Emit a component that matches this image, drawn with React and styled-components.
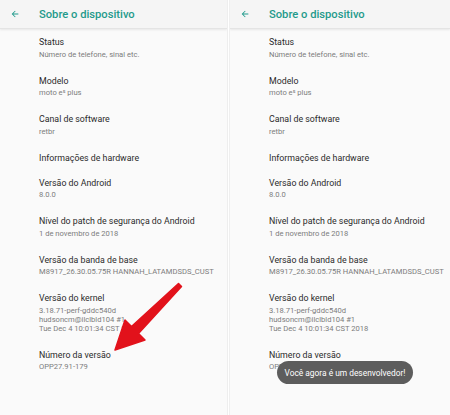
import React from "react";
import styled, { createGlobalStyle } from "styled-components";

const GlobalStyle = createGlobalStyle`
  html, body {
    margin: 0;
    padding: 0;
    background: #fafafa;
  }
  body {
    font-family: Roboto, "Noto Sans", sans-serif;
  }
`;

const Screen = styled.div`
  width: 450px;
  height: 415px;
  display: flex;
  overflow: hidden;
  position: relative;
`;

const Panel = styled.div`
  width: ${(p) => p.width}px;
  height: 100%;
  background: #fafafa;
  position: relative;
  overflow: hidden;
  flex-shrink: 0;
`;

const Divider = styled.div`
  width: 3px;
  background: #ffffff;
  border-left: 1px solid #eeeeee;
  border-right: 1px solid #efefef;
  box-sizing: border-box;
`;

const Header = styled.div`
  height: 29px;
  display: flex;
  align-items: center;
  background: #f5f5f5;
  border-bottom: 1px solid #e4e4e4;
  box-shadow: 0 1px 2px rgba(0, 0, 0, 0.08);
  box-sizing: border-box;
  position: relative;
  z-index: 1;
`;

const Back = styled.div`
  width: 39px;
  display: flex;
  justify-content: flex-start;
  padding-left: 10px;
  box-sizing: border-box;
  color: #1f9a8b;
`;

const Title = styled.div`
  font-size: 11.2px;
  font-weight: 500;
  color: #1f9a8b;
  white-space: nowrap;
`;

const List = styled.div`
  padding-left: 39px;
  display: flex;
  flex-direction: column;
`;

const Item = styled.div`
  padding: 7px 0 6px;
  white-space: nowrap;
`;

const ItemTitle = styled.div`
  font-size: 8.8px;
  line-height: 12px;
  color: #2a2a2a;
`;

const ItemSub = styled.div`
  font-size: 7.6px;
  line-height: 9px;
  margin-top: 1.5px;
  margin-bottom: 3px;
  color: #7c7c7c;
`;

const Toast = styled.div`
  position: absolute;
  left: 47px;
  top: 361px;
  width: 136px;
  height: 23px;
  border-radius: 12px;
  background: #5d5d5d;
  color: #ffffff;
  font-size: 8.4px;
  display: flex;
  align-items: center;
  justify-content: center;
  z-index: 2;
`;

const Pointer = styled.svg`
  position: absolute;
  left: 0;
  top: 0;
  z-index: 2;
`;

const items = [
  { title: "Status", lines: ["Número de telefone, sinal etc."] },
  { title: "Modelo", lines: ["moto e⁵ plus"] },
  { title: "Canal de software", lines: ["retbr"] },
  { title: "Informações de hardware", lines: [] },
  { title: "Versão do Android", lines: ["8.0.0"] },
  { title: "Nível do patch de segurança do Android", lines: ["1 de novembro de 2018"] },
  { title: "Versão da banda de base", lines: ["M8917_26.30.05.75R HANNAH_LATAMDSDS_CUST"] },
  {
    title: "Versão do kernel",
    lines: ["3.18.71-perf-gddc540d", "hudsoncm@ilclbld104 #1", "Tue Dec 4 10:01:34 CST 2018"],
  },
  { title: "Número da versão", lines: ["OPP27.91-179"] },
];

function BackArrow() {
  return (
    <svg width="10" height="10" viewBox="0 0 24 24">
      <path
        d="M20 11H7.83l5.59-5.59L12 4l-8 8 8 8 1.41-1.41L7.83 13H20v-2z"
        fill="currentColor"
      />
    </svg>
  );
}

function About({ width, children }) {
  return (
    <Panel width={width}>
      <Header>
        <Back>
          <BackArrow />
        </Back>
        <Title>Sobre o dispositivo</Title>
      </Header>
      <List>
        {items.map((it) => (
          <Item key={it.title}>
            <ItemTitle>{it.title}</ItemTitle>
            {it.lines.length > 0 && (
              <ItemSub>
                {it.lines.map((l) => (
                  <div key={l}>{l}</div>
                ))}
              </ItemSub>
            )}
          </Item>
        ))}
      </List>
      {children}
    </Panel>
  );
}

export default function App() {
  return (
    <>
      <GlobalStyle />
      <Screen>
        <About width={227}>
          <Pointer width="227" height="415">
            <path
              d="M115 350 L125 320 L131.5 326.5 L178.5 283.5 L181.5 286.5 L138.5 333.5 L145 340 Z"
              fill="#e2121b"
              stroke="#e2121b"
              strokeWidth="1.5"
              strokeLinejoin="round"
            />
          </Pointer>
        </About>
        <Divider />
        <About width={220}>
          <Toast>Você agora é um desenvolvedor!</Toast>
        </About>
      </Screen>
    </>
  );
}
